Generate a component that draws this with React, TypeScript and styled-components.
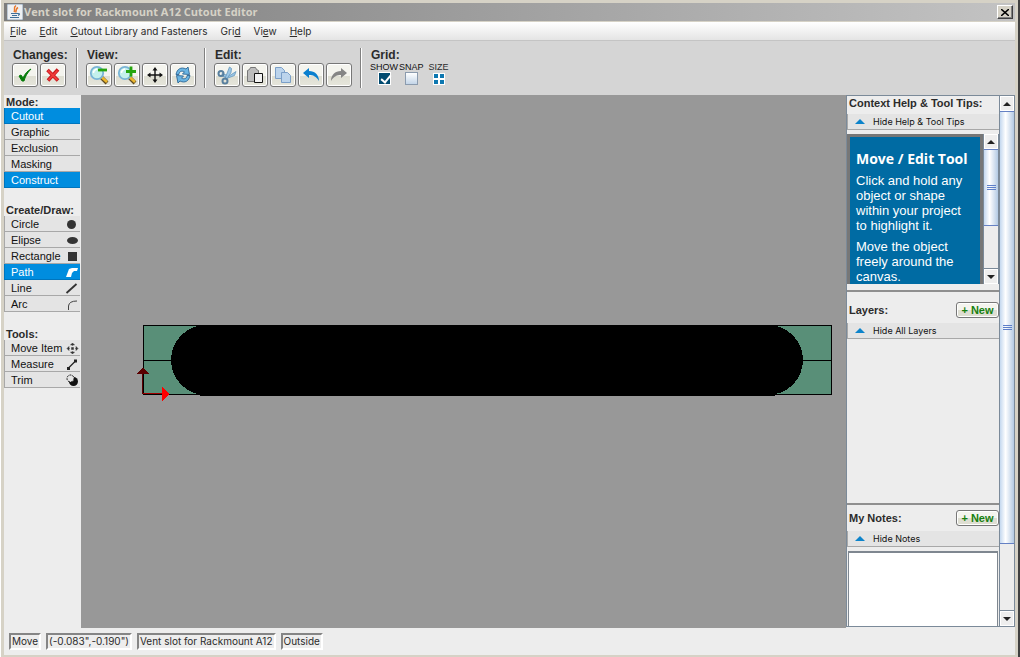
import React from 'react';
import styled, { createGlobalStyle, css } from 'styled-components';

const sans = '"Liberation Sans", Arial, sans-serif';
const small = 'Inter, Tahoma, sans-serif';
const face = '#ededed';
const blue = '#008ddf';

const GlobalStyle = createGlobalStyle`
  * { box-sizing: border-box; }
  html, body, #root { height: 100%; }
  body { margin: 0; background: #d6d2c6; font: 11px/12px ${sans}; color: #2b2b2b; }
  button, input, textarea { font: inherit; color: inherit; margin: 0; padding: 0; }
  svg { display: block; flex: none; }
  h1, h2, h3, p { margin: 0; font-size: inherit; }
`;

const Desktop = styled.div`
  min-height: 100vh;
  border-left: 1px solid #fff;
  padding-right: 2px;
  background: #404040;
`;

const Shell = styled.div`
  height: 100vh;
  min-height: 480px;
  display: flex;
  flex-direction: column;
  background: ${face};
  border: solid #d6d2c6;
  border-width: 3px 3px 2px 3px;
`;

const TitleBar = styled.header`
  height: 18px;
  flex: none;
  display: flex;
  align-items: center;
  gap: 1px;
  padding: 0 2px 0 3px;
  background: linear-gradient(90deg, #7d7d7d, #c3c3c3);
`;

const Title = styled.h1`
  flex: 1;
  font: bold 11px/16px "Open Sans", Tahoma, sans-serif;
  color: #d6d2c6;
  white-space: nowrap;
`;

const CloseButton = styled.button`
  width: 16px;
  height: 14px;
  display: grid;
  place-items: center;
  background: #d6d2c6;
  border: solid;
  border-width: 1px;
  border-color: #fff #404040 #404040 #fff;
  box-shadow: inset -1px -1px #808080;
`;

const MenuBar = styled.nav`
  height: 20px;
  flex: none;
  display: flex;
  align-items: center;
  gap: 13px;
  padding: 0 6px;
  border-top: 1px solid #d6d2c6;
  border-bottom: 1px solid #c4c4c4;
  background: linear-gradient(#fff, #e4e4e4);
`;

const MenuItem = styled.button`
  border: 0;
  background: none;
  font: 10px/14px ${small};
  white-space: nowrap;
`;

const ToolBar = styled.div`
  height: 54px;
  flex: none;
  display: flex;
  padding: 7px 8px;
  gap: 8px;
  background: #d5d5d5;
`;

const ToolGroup = styled.section`
  min-width: 56px;
`;

const Heading = styled.h2`
  font: bold 11px/14px ${sans};
  white-space: nowrap;
`;

const ToolHeading = styled(Heading)`
  padding-left: 1px;
  font-size: 12px;
`;

const Buttons = styled.div`
  display: flex;
  gap: 2px;
  padding-top: 1px;
`;

const ToolButton = styled.button`
  width: 26px;
  height: 24px;
  display: grid;
  place-items: center;
  border: 1px solid #777;
  border-radius: 3px;
  box-shadow: inset 0 0 0 1px #fff;
  background: linear-gradient(#f4f4ee 55%, #deded2 55%, #e6e6dc);
`;

const Separator = styled.div`
  width: 2px;
  height: 40px;
  background: linear-gradient(90deg, #808080 50%, #fff 50%);
`;

const GridOptions = styled.div`
  display: flex;
  gap: 1px;
`;

const Option = styled.label`
  display: flex;
  flex-direction: column;
  align-items: center;
  font-size: 9px;
  line-height: 10px;
  color: #111;
`;

const Check = styled.input`
  appearance: none;
  position: relative;
  width: 13px;
  height: 13px;
  border: 1px solid #8b9bae;
  background: linear-gradient(#fff, #c3d5e8);
  &:checked {
    border-color: #fff;
    background: #004a70;
  }
  &:checked::after {
    content: '';
    position: absolute;
    left: 4px;
    top: 0;
    width: 4px;
    height: 8px;
    border: solid #fff;
    border-width: 0 2px 2px 0;
    transform: rotate(40deg);
  }
`;

const SizeButton = styled.button`
  border: 0;
  background: none;
  display: flex;
  flex-direction: column;
  align-items: center;
  gap: 1px;
  margin-left: 4px;
  font-size: 9px;
  line-height: 10px;
`;

const Workspace = styled.div`
  flex: 1;
  min-height: 0;
  display: flex;
`;

const Sidebar = styled.aside`
  width: 77px;
  flex: none;
  display: flex;
  flex-direction: column;
  gap: 16px;
  padding: 1px 1px 0 0;
`;

const SideHeading = styled(Heading)`
  line-height: 12px;
  padding-left: 2px;
`;

const SideButton = styled.button<{ $on?: boolean }>`
  width: 100%;
  height: 16px;
  display: flex;
  align-items: center;
  justify-content: space-between;
  padding: 0 1px 0 6px;
  border: solid #a8a8a8;
  border-width: 0 0 1px 1px;
  background: #e4e4e4;
  color: #111;
  line-height: 14px;
  white-space: nowrap;
  ${(p) =>
    p.$on &&
    css`
      background: ${blue};
      border-color: #0075bd;
      color: #fff;
    `}
`;

const Canvas = styled.main`
  flex: 1;
  min-width: 0;
  overflow: hidden;
  padding: 228px 0 0 55px;
  background: #989898;
`;

const RightPane = styled.aside`
  width: 169px;
  flex: none;
  display: flex;
  border: solid #7b8a99;
  border-width: 1px 0 1px 1px;
  margin-bottom: 1px;
`;

const PaneContent = styled.div`
  flex: 1;
  min-width: 0;
  display: flex;
  flex-direction: column;
`;

const PaneHeading = styled(Heading)`
  padding-left: 2px;
`;

const HeadRow = styled.div`
  display: flex;
  align-items: center;
  justify-content: space-between;
  height: 26px;
`;

const NewButton = styled.button`
  width: 43px;
  height: 16px;
  border: 1px solid #777;
  border-radius: 3px;
  background: linear-gradient(#f4f4ee 50%, #deded2 50%);
  box-shadow: inset 0 0 0 1px #fff;
  color: #16800f;
  font-weight: bold;
  line-height: 14px;
  white-space: nowrap;
`;

const HideRow = styled.button`
  flex: none;
  height: 16px;
  width: 100%;
  display: flex;
  align-items: center;
  gap: 8px;
  padding: 0 0 0 7px;
  border: solid #a8a8a8;
  border-width: 0 0 1px 1px;
  background: #e4e4e4;
  color: #111;
  font: 9px/12px ${small};
  text-align: left;
  white-space: nowrap;
`;

const HelpSection = styled.section`
  display: flex;
  flex-direction: column;
  gap: 4px;
  padding-bottom: 6px;
`;

const HelpFrame = styled.div`
  display: flex;
  height: 150px;
`;

const HelpText = styled.article`
  flex: 1;
  overflow: hidden;
  border: solid #777;
  border-width: 3px 3px 0 3px;
  padding: 14px 8px 0 6px;
  background: #006ba3;
  color: #fff;
  font-size: 13px;
  line-height: 15px;
  p { margin-top: 6px; }
`;

const HelpTitle = styled.h3`
  font: bold 14px/16px "Open Sans", Verdana, sans-serif;
  white-space: nowrap;
`;

const LayersSection = styled.section`
  flex: 1;
  border: solid #8f8f8f;
  border-width: 2px 0;
  padding-top: 5px;
`;

const NotesSection = styled.section`
  height: 121px;
  display: flex;
  flex-direction: column;
`;

const NotesText = styled.textarea`
  flex: 1;
  width: 150px;
  margin-top: 4px;
  margin-left: 1px;
  resize: none;
  outline: none;
  border: solid #7f8790;
  border-width: 2px 1px 0 1px;
  background: #fff;
`;

const Scroll = styled.div`
  width: 16px;
  flex: none;
  display: flex;
  flex-direction: column;
  border: 1px solid #7b8a99;
  border-width: 0 1px;
  background: ${face};
`;

const ScrollArrow = styled.button`
  height: 15px;
  width: 100%;
  display: grid;
  place-items: center;
  border: 1px solid #fff;
  background: #eee;
`;

const Thumb = styled.div<{ $grow: number }>`
  flex: ${(p) => p.$grow} 0 0;
  display: grid;
  place-items: center;
  border: 1px solid #6581c4;
  border-width: 1px 0;
  background: linear-gradient(90deg, #c4d8ef, #fff 40%, #b3cae4);
`;

const Track = styled.div<{ $grow: number }>`
  flex: ${(p) => p.$grow} 0 0;
  border-bottom: 1px solid #7b8a99;
`;

const StatusBar = styled.footer`
  height: 27px;
  flex: none;
  display: flex;
  align-items: flex-start;
  gap: 5px;
  padding: 5px;
`;

const StatusItem = styled.span`
  height: 17px;
  padding: 0 1px;
  border: 2px solid;
  border-color: #858585 #fff #fff #858585;
  font: 10px/13px ${small};
  white-space: nowrap;
`;

const JavaIcon = () => (
  <svg width="16" height="16" viewBox="0 0 16 16">
    <rect width="16" height="16" rx="1" fill="#eef0f2" stroke="#8aa0b5" />
    <path d="M9 1.500C5.500 4 9 5 7 8M11 3.500C8.500 5 10 6 8.500 8.500" fill="none" stroke="#e8772a" strokeWidth="1.500" />
    <path d="M4 9.500h7M5 11.500h5M3 13.500h9M11 9.500q3 0 0 2" fill="none" stroke="#3f6f98" strokeWidth="1.200" />
  </svg>
);

const Lens = ({ plus }: { plus?: boolean }) => (
  <svg width="20" height="20" viewBox="0 0 20 20">
    <path d="M12 12l6 6" stroke="#5f4b22" strokeWidth="4" />
    <path d="M12.500 12l5.500 5" stroke="#edb72c" strokeWidth="2.600" />
    <circle cx="8" cy="8" r="6.200" fill="#c4f0ec" stroke="#79b4d6" strokeWidth="1.800" />
    <path d="M4.500 8q0-3 3.500-4" stroke="#fff" strokeWidth="1.500" fill="none" />
    <path d={plus ? 'M9 6.500h10M14 1.500v10' : 'M9 5h9'} stroke="#25a50e" strokeWidth="2.800" />
  </svg>
);

const CheckIcon = () => (
  <svg width="16" height="16" viewBox="0 0 16 16">
    <path d="M2 9l2-1 2 3C8 7 10 4 14 2C10 6 8 10 7 14H5Z" fill="#087d0c" stroke="#087d0c" />
  </svg>
);
const CrossIcon = () => (
  <svg width="16" height="16" viewBox="0 0 16 16">
    <path d="M2.500 3L13 13.500M13 2.500L3 13.500" stroke="#c9191e" strokeWidth="3.600" />
    <path d="M3 3.500l9.500 9.500M12.500 3.500l-9 9.500" stroke="#f03a3a" strokeWidth="1.800" />
  </svg>
);
const MoveIcon = () => (
  <svg width="18" height="18" viewBox="0 0 18 18">
    <path d="M9 3v12M3 9h12" stroke="#111" strokeWidth="1.400" />
    <path d="M9 1l2.500 3.500h-5ZM9 17l2.500-3.500h-5ZM1 9l3.500-2.500v5ZM17 9l-3.500-2.500v5Z" fill="#111" />
  </svg>
);
const RefreshIcon = () => (
  <svg width="18" height="18" viewBox="0 0 18 18" fill="#6bb5e3" stroke="#2b6796" strokeWidth=".9">
    <path d="M2 8.500C3 3 7 .5 12 3L14 1l1.500 7.500-7-.5 2-2.200C7.500 4.500 5 5.500 5 8.500Z" />
    <path d="M16 9.500c-1 5.500-5 8-10 5.500L4 17 2.500 9.500l7 .5-2 2.200c3 1.300 5.500.3 5.500-2.700Z" />
  </svg>
);
const ScissorsIcon = () => (
  <svg width="20" height="20" viewBox="0 0 20 20" fill="none">
    <path d="M5 8.500l7 2.500 7-4.500-1.500 4L11 13l-6-2Z" fill="#9cc7e6" stroke="#6497bd" strokeWidth=".8" />
    <path d="M8 13.500L12.500 2l2 1.500-.5 4-4.500 7Z" fill="#9cc7e6" stroke="#6497bd" strokeWidth=".8" />
    <circle cx="4" cy="8.500" r="2.500" stroke="#587f9e" strokeWidth="2" />
    <circle cx="8" cy="16" r="2.500" stroke="#587f9e" strokeWidth="2" />
  </svg>
);
const PasteIcon = () => (
  <svg width="18" height="18" viewBox="0 0 18 18">
    <path d="M1.500 4.500l2-1 1-2h5l1 2 2 1v11h-11Z" fill="#bdbdbd" stroke="#777" />
    <path d="M8.500 7.500h8v9h-8Z" fill="#f2f2f2" stroke="#111" />
  </svg>
);
const CopyIcon = () => (
  <svg width="18" height="18" viewBox="0 0 18 18" fill="#bcd4ec" stroke="#7b9fc8">
    <path d="M1.500 1.500h6l3 3v8h-9Z" />
    <path d="M7.500 6.500h6l3 3v7h-9Z" />
  </svg>
);
const TurnIcon = ({ redo }: { redo?: boolean }) => (
  <svg width="18" height="16" viewBox="0 0 18 16">
    <path
      d={redo ? 'M17 6l-6-5v3C5 4 1 8 1 14C4 9 7 8 11 8v3Z' : 'M1 6l6-5v3C13 4 17 8 17 14C14 9 11 8 7 8v3Z'}
      fill={redo ? '#858585' : '#0b80cf'}
    />
  </svg>
);
const DotsIcon = () => (
  <svg width="12" height="12" viewBox="0 0 12 12">
    <path d="M0 0h12v12H0Z" fill="#fff" />
    <path d="M1 1h4v4H1ZM7 1h4v4H7ZM1 7h4v4H1ZM7 7h4v4H7Z" fill="#0d77b0" />
  </svg>
);
const Arrow = ({ down }: { down?: boolean }) => (
  <svg width="8" height="4" viewBox="0 0 8 4">
    <path d={down ? 'M0 0h8L4 4Z' : 'M0 4h8L4 0Z'} fill="#222" />
  </svg>
);
const HideArrow = () => (
  <svg width="10" height="5" viewBox="0 0 10 5">
    <path d="M0 5h10L5 0Z" fill="#0d84cb" />
  </svg>
);
const Grip = () => (
  <svg width="9" height="5" viewBox="0 0 9 5">
    <path d="M0 0h9v1H0ZM0 2h9v1H0ZM0 4h9v1H0Z" fill="#5d7fc9" />
  </svg>
);

const shapes: Record<string, React.ReactNode> = {
  Circle: <circle cx="6.500" cy="7.500" r="4.500" fill="#333" />,
  Elipse: <ellipse cx="7.500" cy="7.500" rx="5.500" ry="3.500" fill="#333" />,
  Rectangle: <path d="M3 3h9v9H3Z" fill="#333" />,
  Path: <path d="M1 12L4 4L7 3H13L12 6H9L7 8L6 12Z" fill="#fff" />,
  Line: <path d="M1.500 12L11.500 3" stroke="#333" strokeWidth="1.800" />,
  Arc: <path d="M3.500 13V9Q4 4 12 4" stroke="#444" fill="none" />,
  'Move Item': (
    <path d="M7.500 2l2 2h-4ZM7.500 13l2-2h-4ZM2 7.500l2-2v4ZM13 7.500l-2-2v4ZM6.500 6.500h2v2h-2ZM7.500 4v1M7.500 10v1M4 7.500h1M10 7.500h1" fill="#333" stroke="#333" strokeWidth=".5" />
  ),
  Measure: (
    <>
      <path d="M3.500 11L10.500 4" stroke="#222" strokeWidth="1.200" />
      <path d="M2 10h3v3H2ZM9 2.500h3v3H9Z" fill="#222" />
    </>
  ),
  Trim: (
    <>
      <circle cx="8.500" cy="8.500" r="4.500" fill="#111" />
      <circle cx="5.500" cy="5.500" r="3.500" fill="#e4e4e4" stroke="#111" strokeDasharray="2 1" />
    </>
  ),
};

const sections = [
  { title: 'Mode:', items: ['Cutout', 'Graphic', 'Exclusion', 'Masking', 'Construct'] },
  { title: 'Create/Draw:', items: ['Circle', 'Elipse', 'Rectangle', 'Path', 'Line', 'Arc'] },
  { title: 'Tools:', items: ['Move Item', 'Measure', 'Trim'] },
];
const active = ['Cutout', 'Construct', 'Path'];

const menus: [string, string, string][] = [
  ['', 'F', 'ile'],
  ['', 'E', 'dit'],
  ['', 'C', 'utout Library and Fasteners'],
  ['Gri', 'd', ''],
  ['Vi', 'e', 'w'],
  ['', 'H', 'elp'],
];

const toolGroups: { title: string; tools: [string, React.ReactNode][] }[] = [
  { title: 'Changes:', tools: [['Accept', <CheckIcon />], ['Cancel', <CrossIcon />]] },
  { title: 'View:', tools: [['Zoom out', <Lens />], ['Zoom in', <Lens plus />], ['Pan', <MoveIcon />], ['Refresh', <RefreshIcon />]] },
  {
    title: 'Edit:',
    tools: [['Cut', <ScissorsIcon />], ['Paste', <PasteIcon />], ['Copy', <CopyIcon />], ['Undo', <TurnIcon />], ['Redo', <TurnIcon redo />]],
  },
];

const ScrollBar = ({ thumb, rest }: { thumb: number; rest: number }) => (
  <Scroll>
    <ScrollArrow aria-label="Scroll up"><Arrow /></ScrollArrow>
    <Thumb $grow={thumb}><Grip /></Thumb>
    <Track $grow={rest} />
    <ScrollArrow aria-label="Scroll down"><Arrow down /></ScrollArrow>
  </Scroll>
);

const Drawing = () => (
  <svg width="700" height="80" viewBox="0 0 700 80" shapeRendering="crispEdges">
    <rect x="7.500" y="2.500" width="688" height="69" fill="#598f78" stroke="#000" />
    <path d="M7 37.500h688" stroke="#000" />
    <rect x="35" y="2" width="632" height="70" rx="35" fill="#000" />
    <path d="M64 72h575v1H64Z" />
    <path d="M6.500 71V50" stroke="#5a0000" />
    <path d="M0 51h13l-5-6H6Z" fill="#5a0000" />
    <path d="M7 70.500h20" stroke="#a00000" />
    <path d="M26 64v14l7-7Z" fill="#f00" />
  </svg>
);

export default function App() {
  return (
    <Desktop>
      <GlobalStyle />
      <Shell>
        <TitleBar>
          <JavaIcon />
          <Title>Vent slot for Rackmount A12 Cutout Editor</Title>
          <CloseButton aria-label="Close">
            <svg width="8" height="7" viewBox="0 0 8 7"><path d="M0 0l8 7M8 0L0 7" stroke="#000" strokeWidth="1.500" /></svg>
          </CloseButton>
        </TitleBar>
        <MenuBar>
          {menus.map(([a, key, b]) => (
            <MenuItem key={a + key + b}>{a}<u>{key}</u>{b}</MenuItem>
          ))}
        </MenuBar>
        <ToolBar>
          {toolGroups.map((g) => (
            <React.Fragment key={g.title}>
              <ToolGroup>
                <ToolHeading>{g.title}</ToolHeading>
                <Buttons>
                  {g.tools.map(([name, icon]) => (
                    <ToolButton key={name} aria-label={name}>{icon}</ToolButton>
                  ))}
                </Buttons>
              </ToolGroup>
              <Separator />
            </React.Fragment>
          ))}
          <ToolGroup>
            <ToolHeading>Grid:</ToolHeading>
            <GridOptions>
              <Option>SHOW<Check type="checkbox" defaultChecked /></Option>
              <Option>SNAP<Check type="checkbox" /></Option>
              <SizeButton>SIZE<DotsIcon /></SizeButton>
            </GridOptions>
          </ToolGroup>
        </ToolBar>
        <Workspace>
          <Sidebar>
            {sections.map((s) => (
              <section key={s.title}>
                <SideHeading>{s.title}</SideHeading>
                {s.items.map((name) => (
                  <SideButton key={name} $on={active.includes(name)} aria-pressed={active.includes(name)}>
                    {name}
                    {shapes[name] && <svg width="14" height="14" viewBox="0 0 14 14">{shapes[name]}</svg>}
                  </SideButton>
                ))}
              </section>
            ))}
          </Sidebar>
          <Canvas><Drawing /></Canvas>
          <RightPane>
            <PaneContent>
              <HelpSection>
                <PaneHeading>Context Help &amp; Tool Tips:</PaneHeading>
                <HideRow><HideArrow />Hide Help &amp; Tool Tips</HideRow>
                <HelpFrame>
                  <HelpText>
                    <HelpTitle>Move / Edit Tool</HelpTitle>
                    <p>Click and hold any object or shape within your project to highlight it.</p>
                    <p>Move the object freely around the canvas.</p>
                  </HelpText>
                  <ScrollBar thumb={76} rest={43} />
                </HelpFrame>
              </HelpSection>
              <LayersSection>
                <HeadRow><PaneHeading>Layers:</PaneHeading><NewButton>+ New</NewButton></HeadRow>
                <HideRow><HideArrow />Hide All Layers</HideRow>
              </LayersSection>
              <NotesSection>
                <HeadRow><PaneHeading as="label" htmlFor="notes">My Notes:</PaneHeading><NewButton>+ New</NewButton></HeadRow>
                <HideRow><HideArrow />Hide Notes</HideRow>
                <NotesText id="notes" />
              </NotesSection>
            </PaneContent>
            <ScrollBar thumb={434} rest={66} />
          </RightPane>
        </Workspace>
        <StatusBar>
          <StatusItem>Move</StatusItem>
          <StatusItem>(-0.083",-0.190")</StatusItem>
          <StatusItem>Vent slot for Rackmount A12</StatusItem>
          <StatusItem>Outside</StatusItem>
        </StatusBar>
      </Shell>
    </Desktop>
  );
}
